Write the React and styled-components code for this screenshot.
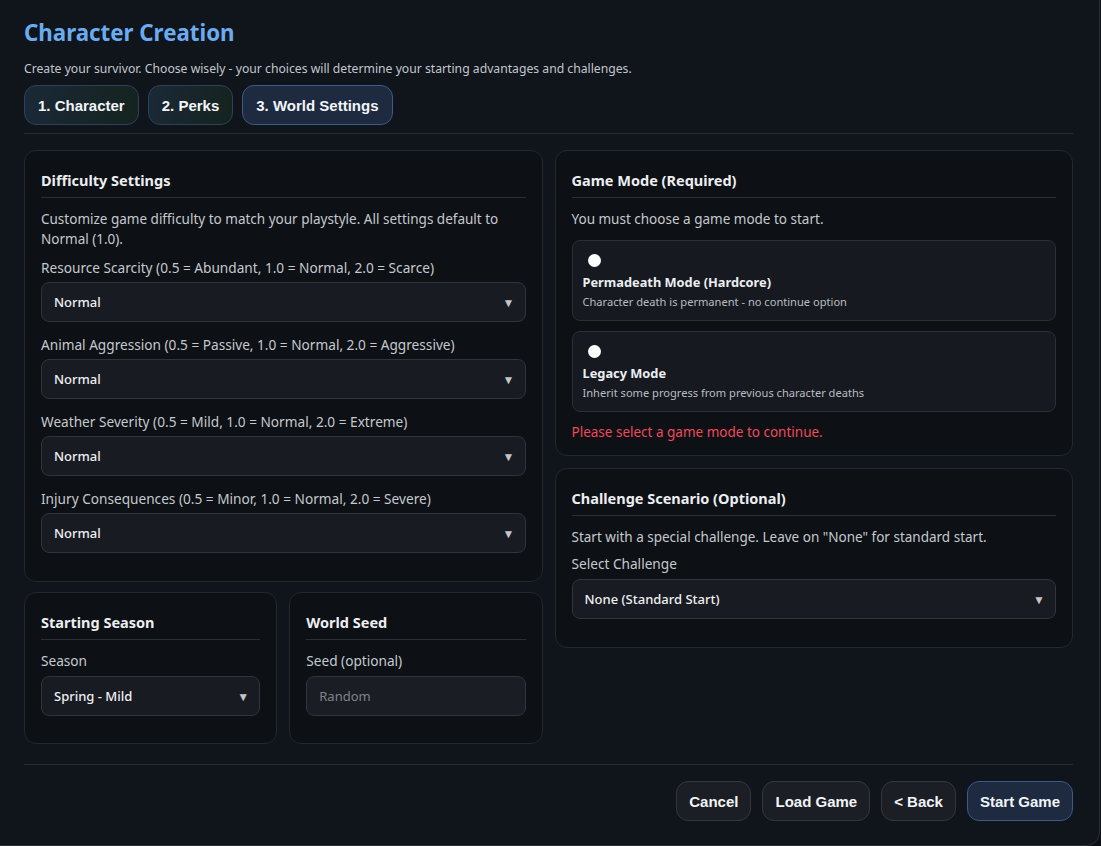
import React, { useState } from "react";
import styled, { createGlobalStyle } from "styled-components";

const GlobalStyle = createGlobalStyle`
  * { box-sizing: border-box; }
  html, body {
    margin: 0;
    padding: 0;
    background: #0c0f14;
    font-family: "Noto Sans", "Open Sans", sans-serif;
    color: #e6e8eb;
  }
`;

const Modal = styled.div`
  width: 1100px;
  height: 846px;
  background: #10141b;
  border-right: 1px solid #2a2e36;
  border-bottom: 1px solid #2a2e36;
  border-bottom-right-radius: 14px;
  padding: 19px 26px 0 24px;
  display: flex;
  flex-direction: column;
`;

const Title = styled.h1`
  margin: 0;
  font-size: 22.3px;
  font-weight: 700;
  color: #6aacf0;
  line-height: 28px;
`;

const Subtitle = styled.p`
  margin: 14px 0 8px;
  font-size: 12.2px;
  color: #c3c7cd;
  line-height: 16px;
`;

const Tabs = styled.div`
  display: flex;
  gap: 9px;
  padding-bottom: 8px;
  border-bottom: 1px solid #262a31;
`;

const Tab = styled.button`
  height: 40px;
  padding: 0 13px;
  border-radius: 12px;
  border: 1px solid ${(p) => (p.$active ? "#3d5b86" : "#2b4258")};
  background: ${(p) =>
    p.$active
      ? "#1e2a40"
      : "linear-gradient(90deg, #1a2936 0%, #15231f 100%)"};
  color: #f2f4f7;
  font-family: "Liberation Sans", Arial, sans-serif;
  font-weight: 700;
  font-size: 15px;
  cursor: pointer;
`;

const Content = styled.div`
  display: grid;
  grid-template-columns: 1fr 1fr;
  gap: 12px;
  margin-top: 16px;
  flex: 1;
  align-items: start;
`;

const Column = styled.div`
  display: flex;
  flex-direction: column;
  gap: ${(p) => p.$gap || 12}px;
`;

const Row = styled.div`
  display: grid;
  grid-template-columns: 1fr 1fr;
  gap: 12px;
`;

const Card = styled.section`
  background: #0d1015;
  border: 1px solid #23272e;
  border-radius: 12px;
  padding: 16px 16px ${(p) => p.$pb || 16}px;
`;

const CardTitle = styled.h3`
  margin: 0 0 ${(p) => p.$mb || 11}px;
  padding: 4px 0 8px;
  font-size: 14.5px;
  font-weight: 700;
  color: #eceef1;
  border-bottom: 1px solid #2a2e35;
  line-height: 18px;
`;

const Text = styled.p`
  margin: 0 0 ${(p) => p.$mb || 9}px;
  font-size: 13.5px;
  line-height: 20px;
  color: #c5c9ce;
`;

const Label = styled.label`
  display: block;
  font-size: 13.65px;
  line-height: 20px;
  color: #c5c9ce;
  margin-bottom: ${(p) => p.$mb || 5}px;
`;

const SelectWrap = styled.div`
  position: relative;
  margin-bottom: ${(p) => p.$mb || 0}px;
`;

const Select = styled.select`
  appearance: none;
  width: 100%;
  height: 40px;
  padding: 0 12px;
  border-radius: 8px;
  border: 1px solid #30343b;
  background: #181b21;
  color: #eef0f2;
  font-family: "Noto Sans", sans-serif;
  font-size: 13px;
  font-weight: 500;
  outline: none;
`;

const Arrow = styled.span`
  position: absolute;
  right: 11px;
  top: 50%;
  transform: translateY(-50%);
  font-size: 12px;
  color: #c4c6ca;
  pointer-events: none;
`;

const Input = styled.input`
  width: 100%;
  height: 40px;
  padding: 0 12px;
  border-radius: 8px;
  border: 1px solid #30343b;
  background: #1a1d23;
  color: #eef0f2;
  font-family: "Noto Sans", sans-serif;
  font-size: 13px;
  outline: none;
  &::placeholder { color: #7f838a; }
`;

const Option = styled.label`
  display: block;
  background: #16191f;
  border: 1px solid #2b2f36;
  border-radius: 8px;
  padding: 12px 10px 10px;
  margin-bottom: 10px;
  cursor: pointer;
`;

const Radio = styled.input`
  appearance: none;
  display: block;
  width: 13px;
  height: 13px;
  margin: 1px 0 6px 5px;
  border-radius: 50%;
  background: #ffffff;
`;

const OptionTitle = styled.div`
  font-size: 12.8px;
  font-weight: 700;
  color: #eceef1;
  line-height: 18px;
`;

const OptionDesc = styled.div`
  font-size: 11.1px;
  color: #b9bdc3;
  line-height: 16px;
  margin-top: 3px;
`;

const Error = styled.p`
  margin: 10px 0 0;
  font-size: 13.5px;
  color: #ef4a5a;
  line-height: 20px;
`;

const Footer = styled.div`
  display: flex;
  justify-content: flex-end;
  gap: 11px;
  border-top: 1px solid #262a31;
  padding-top: 16px;
  margin-bottom: 24px;
`;

const Button = styled.button`
  height: 40px;
  padding: 0 12px;
  border-radius: 12px;
  border: 1px solid ${(p) => (p.$primary ? "#3c5a88" : "#33363d")};
  background: ${(p) => (p.$primary ? "#1e2a40" : "#1b1e24")};
  color: #f2f4f7;
  font-family: "Liberation Sans", Arial, sans-serif;
  font-weight: 700;
  font-size: 15px;
  cursor: pointer;
`;

const difficulty = [
  "Resource Scarcity (0.5 = Abundant, 1.0 = Normal, 2.0 = Scarce)",
  "Animal Aggression (0.5 = Passive, 1.0 = Normal, 2.0 = Aggressive)",
  "Weather Severity (0.5 = Mild, 1.0 = Normal, 2.0 = Extreme)",
  "Injury Consequences (0.5 = Minor, 1.0 = Normal, 2.0 = Severe)",
];

const modes = [
  {
    id: "permadeath",
    title: "Permadeath Mode (Hardcore)",
    desc: "Character death is permanent - no continue option",
  },
  {
    id: "legacy",
    title: "Legacy Mode",
    desc: "Inherit some progress from previous character deaths",
  },
];

const Dropdown = ({ value, mb }) => (
  <SelectWrap $mb={mb}>
    <Select defaultValue={value}>
      <option>{value}</option>
    </Select>
    <Arrow>▼</Arrow>
  </SelectWrap>
);

export default function App() {
  const [mode, setMode] = useState(null);

  return (
    <>
      <GlobalStyle />
      <Modal>
        <Title>Character Creation</Title>
        <Subtitle>
          Create your survivor. Choose wisely - your choices will determine your
          starting advantages and challenges.
        </Subtitle>
        <Tabs>
          <Tab>1. Character</Tab>
          <Tab>2. Perks</Tab>
          <Tab $active>3. World Settings</Tab>
        </Tabs>

        <Content>
          <Column $gap={10}>
            <Card $pb={28}>
              <CardTitle>Difficulty Settings</CardTitle>
              <Text>
                Customize game difficulty to match your playstyle. All settings
                default to Normal (1.0).
              </Text>
              {difficulty.map((label, i) => (
                <div key={label}>
                  <Label $mb={4}>{label}</Label>
                  <Dropdown value="Normal" mb={i < 3 ? 13 : 0} />
                </div>
              ))}
            </Card>
            <Row>
              <Card $pb={27}>
                <CardTitle>Starting Season</CardTitle>
                <Label>Season</Label>
                <Dropdown value="Spring - Mild" />
              </Card>
              <Card $pb={27}>
                <CardTitle>World Seed</CardTitle>
                <Label>Seed (optional)</Label>
                <Input placeholder="Random" />
              </Card>
            </Row>
          </Column>

          <Column>
            <Card $pb={13}>
              <CardTitle>Game Mode (Required)</CardTitle>
              <Text $mb={11}>You must choose a game mode to start.</Text>
              {modes.map((m) => (
                <Option key={m.id}>
                  <Radio
                    type="radio"
                    name="mode"
                    checked={mode === m.id}
                    onChange={() => setMode(m.id)}
                  />
                  <OptionTitle>{m.title}</OptionTitle>
                  <OptionDesc>{m.desc}</OptionDesc>
                </Option>
              ))}
              {!mode && <Error>Please select a game mode to continue.</Error>}
            </Card>
            <Card $pb={28}>
              <CardTitle>Challenge Scenario (Optional)</CardTitle>
              <Text $mb={7}>
                Start with a special challenge. Leave on "None" for standard
                start.
              </Text>
              <Label>Select Challenge</Label>
              <Dropdown value="None (Standard Start)" />
            </Card>
          </Column>
        </Content>

        <Footer>
          <Button>Cancel</Button>
          <Button>Load Game</Button>
          <Button>&lt; Back</Button>
          <Button $primary>Start Game</Button>
        </Footer>
      </Modal>
    </>
  );
}
